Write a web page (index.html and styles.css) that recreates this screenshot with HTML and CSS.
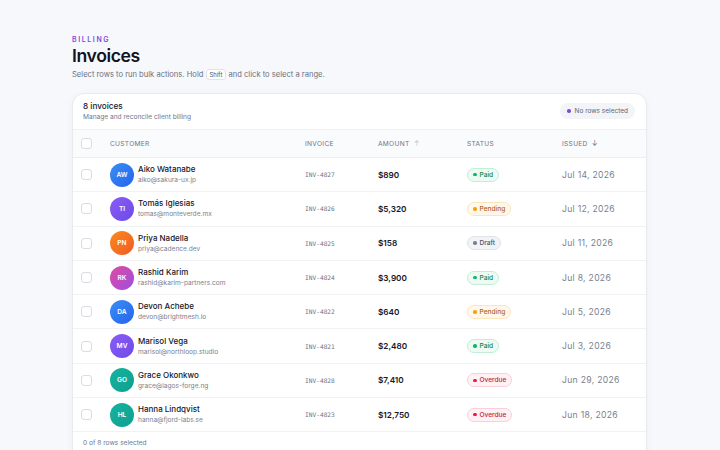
FILE: index.html
```html
<!DOCTYPE html>
<html lang="en">
<head>
  <meta charset="UTF-8" />
  <title>Invoices</title>
  <link rel="stylesheet" href="styles.css">
</head>
<body>
  <main class="page">
    <div class="eyebrow">BILLING</div>
    <h1>Invoices</h1>
    <p class="lead">Select rows to run bulk actions. Hold <kbd>Shift</kbd> and click to select a range.</p>

    <section class="card">
      <div class="card-head">
        <div>
          <div class="card-title">8 invoices</div>
          <div class="card-sub">Manage and reconcile client billing</div>
        </div>
        <div class="sel-pill"><span class="dot"></span>No rows selected</div>
      </div>

      <div class="row head">
        <span class="check"></span>
        <span>Customer</span>
        <span>Invoice</span>
        <span>Amount <i class="arrow faint">&#8593;</i></span>
        <span>Status</span>
        <span>Issued <i class="arrow">&#8595;</i></span>
      </div>

      <div class="row">
        <span class="check"></span>
        <div class="cust"><span class="av av-blue">AW</span><div><div class="name">Aiko Watanabe</div><div class="mail">aiko@sakura-ux.jp</div></div></div>
        <span class="inv">INV-4827</span>
        <span class="amt">$890</span>
        <div class="status"><span class="badge paid">Paid</span></div>
        <span class="date">Jul 14, 2026</span>
      </div>
      <div class="row">
        <span class="check"></span>
        <div class="cust"><span class="av av-violet">TI</span><div><div class="name">Tomás Iglesias</div><div class="mail">tomas@monteverde.mx</div></div></div>
        <span class="inv">INV-4826</span>
        <span class="amt">$5,320</span>
        <div class="status"><span class="badge pending">Pending</span></div>
        <span class="date">Jul 12, 2026</span>
      </div>
      <div class="row">
        <span class="check"></span>
        <div class="cust"><span class="av av-orange">PN</span><div><div class="name">Priya Nadella</div><div class="mail">priya@cadence.dev</div></div></div>
        <span class="inv">INV-4825</span>
        <span class="amt">$158</span>
        <div class="status"><span class="badge draft">Draft</span></div>
        <span class="date">Jul 11, 2026</span>
      </div>
      <div class="row">
        <span class="check"></span>
        <div class="cust"><span class="av av-pink">RK</span><div><div class="name">Rashid Karim</div><div class="mail">rashid@karim-partners.com</div></div></div>
        <span class="inv">INV-4824</span>
        <span class="amt">$3,900</span>
        <div class="status"><span class="badge paid">Paid</span></div>
        <span class="date">Jul 8, 2026</span>
      </div>
      <div class="row">
        <span class="check"></span>
        <div class="cust"><span class="av av-blue">DA</span><div><div class="name">Devon Achebe</div><div class="mail">devon@brightmesh.io</div></div></div>
        <span class="inv">INV-4822</span>
        <span class="amt">$640</span>
        <div class="status"><span class="badge pending">Pending</span></div>
        <span class="date">Jul 5, 2026</span>
      </div>
      <div class="row">
        <span class="check"></span>
        <div class="cust"><span class="av av-violet">MV</span><div><div class="name">Marisol Vega</div><div class="mail">marisol@northloop.studio</div></div></div>
        <span class="inv">INV-4821</span>
        <span class="amt">$2,480</span>
        <div class="status"><span class="badge paid">Paid</span></div>
        <span class="date">Jul 3, 2026</span>
      </div>
      <div class="row">
        <span class="check"></span>
        <div class="cust"><span class="av av-teal">GO</span><div><div class="name">Grace Okonkwo</div><div class="mail">grace@lagos-forge.ng</div></div></div>
        <span class="inv">INV-4828</span>
        <span class="amt">$7,410</span>
        <div class="status"><span class="badge overdue">Overdue</span></div>
        <span class="date">Jun 29, 2026</span>
      </div>
      <div class="row">
        <span class="check"></span>
        <div class="cust"><span class="av av-teal">HL</span><div><div class="name">Hanna Lindqvist</div><div class="mail">hanna@fjord-labs.se</div></div></div>
        <span class="inv">INV-4823</span>
        <span class="amt">$12,750</span>
        <div class="status"><span class="badge overdue">Overdue</span></div>
        <span class="date">Jun 18, 2026</span>
      </div>

      <div class="card-foot">0 of 8 rows selected</div>
    </section>
  </main>
</body>
</html>
```

FILE: styles.css
```css
* { box-sizing: border-box; }

body {
  margin: 0;
  font-family: Inter, "Noto Sans", sans-serif;
  background: #f7f8fb;
  color: #111322;
}

.page {
  padding: 35px 73px 0 72px;
}

.eyebrow {
  font-size: 7px;
  font-weight: 600;
  letter-spacing: 1.6px;
  color: #7c4ddb;
  line-height: 10px;
}

h1 {
  margin: 0;
  font-size: 17.6px;
  font-weight: 600;
  line-height: 22px;
  letter-spacing: -0.4px;
}

.lead {
  margin: 2px 0 0;
  font-size: 7.6px;
  color: #6b7183;
  line-height: 12px;
}

kbd {
  font-family: Inter, sans-serif;
  font-size: 6px;
  padding: 1px 3px;
  border: 1px solid #dfe2e8;
  border-radius: 3px;
  background: #fff;
  color: #4b5060;
}

.card {
  margin-top: 12px;
  background: #fff;
  border: 1px solid #e8eaef;
  border-radius: 12px;
  box-shadow: 0 2px 8px rgba(20, 25, 50, 0.04);
  overflow: hidden;
}

.card-head {
  display: flex;
  justify-content: space-between;
  align-items: center;
  padding: 6px 11px 7px 10px;
  border-bottom: 1px solid #eef0f3;
}

.card-title {
  font-size: 8.2px;
  font-weight: 500;
  line-height: 12px;
  color: #15172a;
}

.card-sub {
  font-size: 6.6px;
  color: #737889;
  line-height: 10px;
}

.sel-pill {
  display: flex;
  align-items: center;
  gap: 4px;
  height: 16px;
  padding: 0 7px;
  border-radius: 8px;
  background: #f2f4f8;
  font-size: 6.5px;
  color: #5e6477;
}

.sel-pill .dot {
  width: 3.5px;
  height: 3.5px;
  border-radius: 50%;
  background: #7c4ddb;
}

.row {
  display: grid;
  grid-template-columns: 29px 195px 73px 89px 95px 1fr;
  align-items: center;
  height: 34.3px;
  padding: 0 10px 0 8px;
  border-bottom: 1px solid #f1f2f5;
}

.row.head {
  height: 28px;
  background: #fafbfc;
  border-bottom: 1px solid #eceef2;
  font-size: 6.6px;
  letter-spacing: 0.3px;
  text-transform: uppercase;
  color: #6e7385;
}

.arrow {
  font-style: normal;
  font-size: 7px;
  margin-left: 2px;
  color: #6e7385;
}

.arrow.faint { color: #c2c6d0; }

.check {
  width: 11px;
  height: 11px;
  border: 1px solid #d9dce4;
  border-radius: 3px;
  background: #fff;
}

.cust {
  display: flex;
  align-items: center;
  gap: 4px;
}

.av {
  width: 24px;
  height: 24px;
  border-radius: 50%;
  display: flex;
  align-items: center;
  justify-content: center;
  color: #fff;
  font-size: 6.6px;
  font-weight: 600;
  flex: none;
}

.av-blue { background: linear-gradient(135deg, #3b8ff5, #2563eb); }
.av-violet { background: linear-gradient(135deg, #8b5cf6, #6d4ae8); }
.av-orange { background: linear-gradient(135deg, #fb8a1c, #f05a28); }
.av-pink { background: linear-gradient(135deg, #e04ba0, #9d4ee0); }
.av-teal { background: linear-gradient(135deg, #16b3a0, #0e9f8f); }

.name {
  font-size: 8px;
  font-weight: 500;
  color: #15172a;
  line-height: 11px;
}

.mail {
  font-size: 6.6px;
  color: #7a7f90;
  line-height: 10px;
}

.inv {
  font-family: "DejaVu Sans Mono", monospace;
  font-size: 6.2px;
  color: #6e7385;
}

.amt {
  font-size: 8.2px;
  font-weight: 600;
  color: #15172a;
}

.status {
  display: flex;
  align-items: center;
}

.badge {
  display: flex;
  align-items: center;
  gap: 3px;
  height: 14px;
  padding: 0 5px;
  border-radius: 7px;
  border: 1px solid;
  font-size: 6.6px;
  font-weight: 500;
}

.badge::before {
  content: "";
  width: 3.5px;
  height: 3.5px;
  border-radius: 50%;
  background: currentColor;
}

.paid { background: #edfbf3; border-color: #c3eed6; color: #16844a; }
.paid::before { background: #12b66a; }
.pending { background: #fff8ea; border-color: #fbe5bb; color: #b5621a; }
.pending::before { background: #f5a20c; }
.draft { background: #f2f3f6; border-color: #dfe2e8; color: #4d5263; }
.draft::before { background: #7a7f90; }
.overdue { background: #fff1f4; border-color: #f9cfd9; color: #c0264a; }
.overdue::before { background: #e11d48; }

.date {
  font-size: 8.6px;
  letter-spacing: 0.3px;
  color: #7a7f90;
}

.card-foot {
  padding: 6px 10px 20px;
  font-size: 6.6px;
  line-height: 10px;
  color: #737889;
}
```
